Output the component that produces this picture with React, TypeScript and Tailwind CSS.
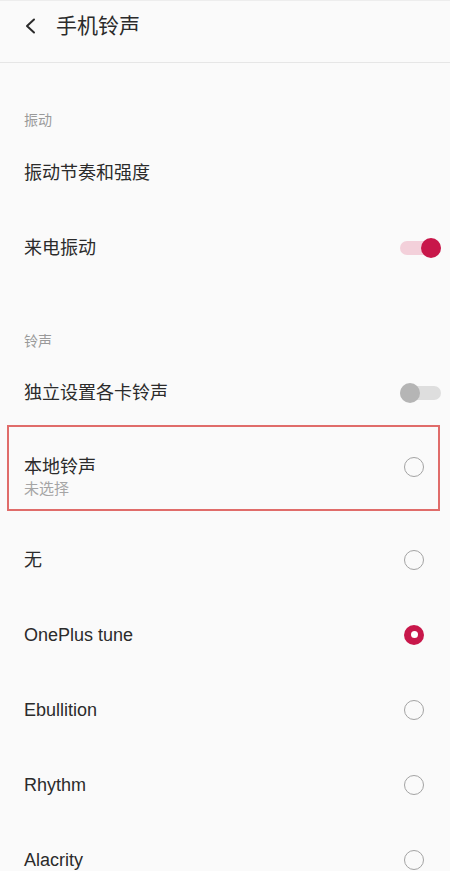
import { useState } from "react";

const FONT = "font-['Liberation_Sans','Noto_Sans_CJK_SC',sans-serif]";

function Toggle({ on }: { on: boolean }) {
  return (
    <div className="relative h-5 w-[41px] shrink-0">
      <div
        className={`absolute left-0 right-0 top-[3px] h-[14px] rounded-full ${
          on ? "bg-[#f3d0da]" : "bg-[#dedede]"
        }`}
      />
      <div
        className={`absolute top-0 h-5 w-5 rounded-full ${
          on ? "right-0 bg-[#c8174a]" : "left-0 bg-[#b5b5b5]"
        }`}
      />
    </div>
  );
}

function Radio({ checked }: { checked: boolean }) {
  if (checked) {
    return (
      <div className="flex h-5 w-5 shrink-0 items-center justify-center rounded-full bg-[#c8174a]">
        <div className="h-[7px] w-[7px] rounded-full bg-white" />
      </div>
    );
  }
  return <div className="h-5 w-5 shrink-0 rounded-full border-[1.5px] border-[#a3a3a3]" />;
}

function SectionLabel({ text, h }: { text: string; h: string }) {
  return (
    <div className={`flex items-end px-6 pb-[5px] ${h}`}>
      <span className="text-[14px] leading-5 text-[#9a9a9a]">{text}</span>
    </div>
  );
}

function Row({ label, right }: { label: string; right?: React.ReactNode }) {
  return (
    <div className="flex h-[75px] items-center justify-between pl-6 pr-[9px]">
      <span className="text-[18px] leading-6 text-[#2b2b2b]">{label}</span>
      {right}
    </div>
  );
}

const tones = ["无", "OnePlus tune", "Ebullition", "Rhythm", "Alacrity"];

export default function App() {
  const [selected] = useState("OnePlus tune");

  return (
    <div className={`h-[871px] w-[450px] overflow-hidden border-t border-[#ededed] bg-[#fafafa] ${FONT}`}>
      <header className="flex h-[62px] items-start border-b border-[#e6e6e6] pl-[25px] pt-[11px]">
        <svg width="12" height="16" viewBox="0 0 12 16" className="mt-[6px]">
          <polyline
            points="9,1.5 2,8 9,14.5"
            fill="none"
            stroke="#2b2b2b"
            strokeWidth="2"
            strokeLinecap="round"
            strokeLinejoin="round"
          />
        </svg>
        <h1 className="ml-[19px] text-[21px] leading-7 text-[#2b2b2b]">手机铃声</h1>
      </header>

      <SectionLabel text="振动" h="h-[72px]" />
      <Row label="振动节奏和强度" />
      <Row label="来电振动" right={<Toggle on />} />

      <SectionLabel text="铃声" h="h-[71px]" />
      <div className="flex h-[74px] items-center justify-between pl-6 pr-[9px]">
        <span className="text-[18px] leading-6 text-[#2b2b2b]">独立设置各卡铃声</span>
        <Toggle on={false} />
      </div>

      <div className="relative flex h-[92px] items-start justify-between pl-6 pr-[26px] pt-[25px]">
        <span className="pointer-events-none absolute bottom-[11px] left-[7px] right-[10px] top-[-5px] border-2 border-[#e06c6a]" />
        <div className="flex flex-col">
          <span className="text-[18px] leading-6 text-[#2b2b2b]">本地铃声</span>
          <span className="text-[15px] leading-5 text-[#a5a5a5]">未选择</span>
        </div>
        <div className="mt-[2px]">
          <Radio checked={false} />
        </div>
      </div>

      {tones.map((t) => (
        <div key={t} className="flex h-[75px] items-center justify-between pl-6 pr-[26px]">
          <span className="text-[18px] leading-6 text-[#2b2b2b]">{t}</span>
          <Radio checked={t === selected} />
        </div>
      ))}
    </div>
  );
}
